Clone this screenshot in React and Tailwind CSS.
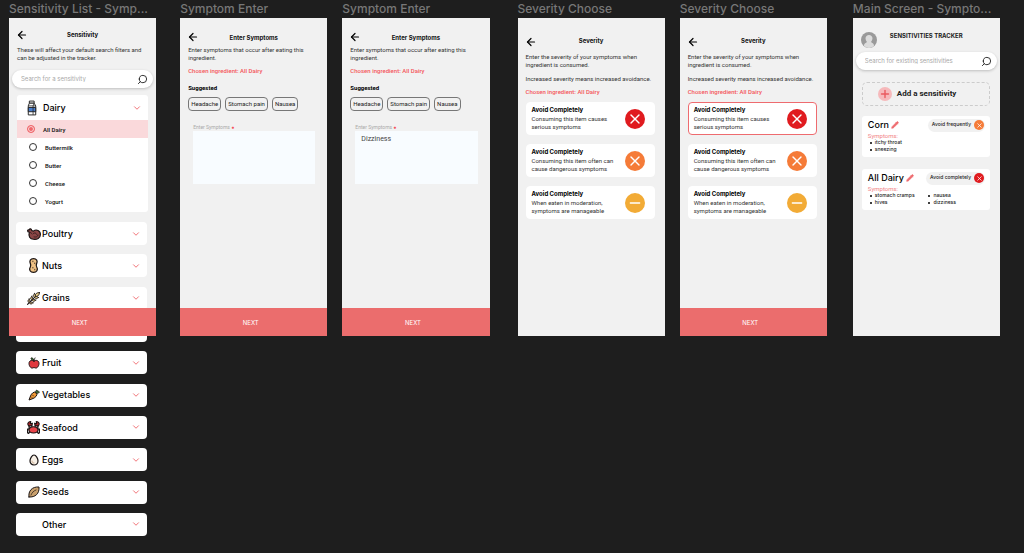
import React from 'react';
import { ArrowLeft, ChevronDown, Minus, Pencil, Plus, Search, X } from 'lucide-react';
import clsx from 'clsx';

/* Food icons */
const Icon = ({ children, className = 'size-3' }) => (
    <svg
        viewBox="0 0 24 24"
        className={clsx('shrink-0', className)}
        stroke="#1a1414"
        strokeWidth="2"
        strokeLinecap="round"
        strokeLinejoin="round"
        fill="none"
        aria-hidden="true"
    >
        {children}
    </svg>
);

const MilkIcon = () => (
    <svg viewBox="0 0 18 30" className="h-4 w-[10px] shrink-0" stroke="#222" strokeWidth="1.8" strokeLinejoin="round" aria-hidden="true">
        <path d="M4 2h9v4H4z" fill="#fff" />
        <path d="M4 6h9l3 5v17H2V11z" fill="#fff" />
        <path d="M2 14h14v8H2z" fill="#4a80d0" />
        <path d="M11 11v17M2 11h14M11 11l2-5" fill="none" strokeWidth="1.4" />
    </svg>
);

const PoultryIcon = () => (
    <Icon className="size-[14px]">
        <path d="M4 9C0 9 0 4 4 5c0-3 4-2 4 1l3 1c5-4 12-1 12 6 0 6-6 9-12 8-6 0-9-5-7-12z" fill="#8a4545" />
        <path d="M10 12c2-3 6-2 7 1M12 17c3 1 6 0 7-3M5 9l3 2" strokeWidth="1.2" />
    </Icon>
);

const PeanutIcon = () => (
    <Icon className="size-[15px]">
        <path d="M12 1c5 0 7 4 5 8-1 2-1 3 0 5 3 5 0 9-5 9s-8-4-5-9c1-2 1-3 0-5C5 5 7 1 12 1z" fill="#efc184" />
        <path d="M11 5v1M14 8v1M11 15v1M14 18v1" strokeWidth="1.2" />
    </Icon>
);

const WheatIcon = () => (
    <Icon className="size-[13px]">
        <path d="M1 23 20 4" />
        <path d="M23 1c-5 0-8 2-8 7 5 1 8-2 8-7z" fill="#ecd08a" strokeWidth="1.6" />
        <path d="M14 3c2 2 2 5 0 7-3-2-3-5 0-7zM9 8c2 2 2 5 0 7-3-2-3-5 0-7zM4 13c2 2 2 5 0 7-3-2-3-5 0-7z" fill="#ecd08a" strokeWidth="1.6" />
        <path d="M21 10c-2-2-5-2-7 0 2 3 5 3 7 0zM16 15c-2-2-5-2-7 0 2 3 5 3 7 0zM11 20c-2-2-5-2-7 0 2 3 5 3 7 0z" fill="#ecd08a" strokeWidth="1.6" />
    </Icon>
);

const AppleIcon = () => (
    <Icon>
        <path d="M12 8c4-3 10-1 10 5 0 5-4 10-7 9-2-1-4-1-6 0-3 1-7-4-7-9 0-6 6-8 10-5z" fill="#e0383e" />
        <path d="M12 8c0-3 1-4 2-6" />
        <path d="M11 6C8 7 6 5 6 2c3-1 5 1 5 4z" fill="#4f9e4c" strokeWidth="1.6" />
    </Icon>
);

const CarrotIcon = () => (
    <Icon>
        <path d="M16 6c-5-1-9 3-11 8L2 22l8-3c5-2 9-6 8-11z" fill="#f29a37" />
        <path d="M16 8c-1-3 0-6 2-6 1 1 1 2 1 3 2-1 3 0 4 1-1 2-4 3-7 2z" fill="#4f9e4c" strokeWidth="1.6" />
        <path d="M9 12l2 2M7 16l1 1" strokeWidth="1.4" />
    </Icon>
);

const CrabIcon = () => (
    <Icon className="size-[13px]">
        <path d="M3 9C0 5 2 1 7 1L6 5l4-1c0 4-3 6-7 5zM21 9c3-4 1-8-4-8l1 4-4-1c0 4 3 6 7 5z" fill="#b52a30" />
        <path d="M4 9v5M20 9v5M9 8v4M15 8v4M3 15H1v7M21 15h2v7M5 20l-2 3M19 20l2 3" strokeWidth="2.4" />
        <path d="M4 15c2-6 14-6 16 0 2 4-3 7-8 7s-10-3-8-7z" fill="#e8454a" />
    </Icon>
);

const EggIcon = () => (
    <Icon>
        <path d="M12 2c4 0 8 7 8 12 0 4-3 8-8 8s-8-4-8-8c0-5 4-12 8-12z" fill="#f7f0e6" strokeWidth="2.4" />
        <path d="M8 14c0 3 2 4 4 4" stroke="#c9a88b" />
    </Icon>
);

const SeedIcon = () => (
    <Icon>
        <path d="M2 22C0 10 8 1 22 2c1 13-7 21-20 20z" fill="#c9a06c" />
        <path d="M6 18c2-5 5-8 10-10" strokeWidth="1.4" />
    </Icon>
);

const dairyItems = ['All Dairy', 'Buttermilk', 'Butter', 'Cheese', 'Yogurt'];

const categories = [
    { name: 'Poultry', icon: PoultryIcon },
    { name: 'Nuts', icon: PeanutIcon },
    { name: 'Grains', icon: WheatIcon },
    { name: '' },
    { name: 'Fruit', icon: AppleIcon },
    { name: 'Vegetables', icon: CarrotIcon },
    { name: 'Seafood', icon: CrabIcon },
    { name: 'Eggs', icon: EggIcon },
    { name: 'Seeds', icon: SeedIcon },
    { name: 'Other' },
];

const severities = [
    { text: ['Consuming this item causes', 'serious symptoms'], icon: X, color: 'bg-[#e01b1f]' },
    { text: ['Consuming this item often can', 'cause dangerous symptoms'], icon: X, color: 'bg-[#f57b38]' },
    { text: ['When eaten in moderation,', 'symptoms are manageable'], icon: Minus, color: 'bg-[#f2ab36]' },
];

/* Shared pieces */
function Frame({ label, className, next, children }) {
    return (
        <section className={clsx('min-w-0 flex-1', className)}>
            <h2 className="h-[18px] whitespace-nowrap text-[12px] leading-[18px] font-medium text-[#777]">{label}</h2>
            <div className="relative h-[318px] bg-[#f1f1f1] text-[#333]">
                {children}
                {next && (
                    <button className="absolute inset-x-0 bottom-0 h-7 bg-[#eb6d6d] pr-[6px] text-[6px] text-white">NEXT</button>
                )}
            </div>
        </section>
    );
}

function TopBar({ title, className }) {
    return (
        <header className={clsx('grid grid-cols-[11px_1fr_11px] px-[7px]', className)}>
            <button aria-label="Back" className="flex h-[10px] items-center">
                <ArrowLeft size={12} strokeWidth={2.4} className="shrink-0 text-black" />
            </button>
            <h1 className="text-center text-[6px] leading-[8px] font-bold text-[#111]">{title}</h1>
        </header>
    );
}

function SearchBox({ placeholder }) {
    return (
        <label className="mx-[3px] flex h-[18px] items-center rounded-full bg-white pr-[5px] pl-[9px] shadow-[0_1px_3px_rgba(0,0,0,0.22)]">
            <input
                type="search"
                aria-label={placeholder}
                placeholder={placeholder}
                className="min-w-0 flex-1 text-[6px] leading-[8px] outline-none placeholder:text-[#a8a8a8]"
            />
            <Search size={11} strokeWidth={2} className="-scale-x-100 text-[#222]" />
        </label>
    );
}

const Chosen = ({ className }) => (
    <p className={clsx("font-[Roboto,sans-serif] text-[6px] leading-[8px] font-medium text-[#f4555a]", className)}>
        Chosen ingredient: All Dairy
    </p>
);

/* Screens */
function SensitivityList() {
    return (
        <>
            <TopBar title="Sensitivity" className="items-center pt-3" />
            <p className="mt-[6px] px-2 font-[Roboto,sans-serif] text-[6px] leading-[8px]">
                These will affect your default search filters and<br />can be adjusted in the tracker.
            </p>
            <div className="mt-2">
                <SearchBox placeholder="Search for a sensitivity" />
            </div>
            <fieldset className="mx-2 mt-[7px] rounded-[3px] bg-white pb-[2px]">
                <button className="flex h-[25px] w-full items-center pr-[6px] pl-[10px] text-[9px] text-black">
                    <MilkIcon />
                    <span className="ml-[6px] flex-1 text-left font-medium">Dairy</span>
                    <ChevronDown size={10} strokeWidth={2.2} className="text-[#f0686c]" />
                </button>
                {dairyItems.map((item, i) => (
                    <label
                        key={item}
                        className={clsx(
                            'flex h-[18px] items-center gap-2 font-[Roboto,sans-serif] text-[6px] font-medium text-[#111]',
                            i === 0 ? 'bg-[#fad9db] pl-[10px]' : 'pl-[12px]',
                        )}
                    >
                        <input
                            type="radio"
                            name="dairy"
                            defaultChecked={i === 0}
                            className="size-2 appearance-none rounded-full border border-[#333] bg-white checked:border-[#f0686c] checked:bg-[#f0686c] checked:shadow-[inset_0_0_0_1px_#fad9db]"
                        />
                        {item}
                    </label>
                ))}
            </fieldset>
            <ul className="mr-[9px] ml-[7px] mt-[10px] flex h-[314px] flex-col justify-between">
                {categories.map(({ name, icon: Glyph }, i) => (
                    <li key={i}>
                        <button className="flex h-[23px] w-full items-center rounded-[4px] bg-white pr-[6px] pl-[9px] text-[9px] text-black">
                            <span className="flex w-[17px] justify-center">{Glyph && <Glyph />}</span>
                            <span className="flex-1 text-left font-medium">{name}</span>
                            <ChevronDown size={10} strokeWidth={2.2} className="text-[#f0686c]" />
                        </button>
                    </li>
                ))}
            </ul>
        </>
    );
}

function SymptomEnter({ id, value }) {
    return (
        <>
            <TopBar title="Enter Symptoms" className="items-end pt-[14px]" />
            <div className="px-2 font-[Roboto,sans-serif] text-[6px] leading-[8px]">
                <p className="mt-1">Enter symptoms that occur after eating this<br />ingredient.</p>
                <Chosen className="mt-[5px]" />
                <h3 className="mt-[9px] font-bold text-black">Suggested</h3>
                <div className="mt-[5px] flex gap-1">
                    {['Headache', 'Stomach pain', 'Nausea'].map((s) => (
                        <button key={s} className="h-[14px] rounded-[4px] border border-[#777] px-[2px] text-[#222]">{s}</button>
                    ))}
                </div>
            </div>
            <div className="mt-3 mr-3 ml-[13px] font-[Roboto,sans-serif]">
                <label htmlFor={id} className="block text-[5px] leading-[8px] text-[#aaa]">
                    Enter Symptoms <span className="text-[#f4555a]">●</span>
                </label>
                <textarea
                    id={id}
                    defaultValue={value}
                    className="block h-[53px] w-full resize-none bg-[#f8fcff] px-[6px] py-1 text-[7px] leading-[8px] text-[#444] outline-none"
                />
            </div>
        </>
    );
}

function SeverityChoose({ selected }) {
    return (
        <>
            <TopBar title="Severity" className="items-start pt-[19px]" />
            <div className="px-2 font-[Roboto,sans-serif] text-[6px] leading-[8px]">
                <p className="mt-[6px]">Enter the severity of your symptoms when<br />ingredient is consumed.</p>
                <p className="mt-[6px] whitespace-nowrap">Increased severity means increased avoidance.</p>
                <Chosen className="mt-[5px]" />
                <div className="mt-[6px] mr-[2px] flex flex-col gap-[9px]">
                    {severities.map(({ text, icon: Glyph, color }, i) => (
                        <button
                            key={i}
                            className={clsx(
                                'flex items-center justify-between rounded-[4px] border bg-white py-[3px] pr-[9px] pl-[5px] text-left',
                                selected === i ? 'border-[#ee6b6f]' : 'border-white',
                            )}
                        >
                            <span>
                                <b className="mb-px block font-[Inter,sans-serif] text-black">Avoid Completely</b>
                                {text[0]}<br />{text[1]}
                            </span>
                            <span className={clsx('flex size-5 items-center justify-center rounded-full text-white', color)}>
                                <Glyph size={16} strokeWidth={2} />
                            </span>
                        </button>
                    ))}
                </div>
            </div>
        </>
    );
}

function SensitivityCard({ name, level, color, symptoms }) {
    return (
        <article className="rounded-[3px] bg-white pt-[2px] pr-[5px] pb-1 pl-[6px]">
            <div className="flex items-center">
                <h3 className="text-[9px] leading-[14px] font-medium text-black">{name}</h3>
                <button aria-label={`Edit ${name}`} className="ml-[2px]">
                    <Pencil size={8} className="fill-[#ee6b6f] text-[#ee6b6f]" />
                </button>
                <span className="ml-auto flex h-[13px] items-center gap-[3px] rounded-full bg-[#f1f1f1] pr-px pl-1 text-[5px] font-medium text-[#222]">
                    {level}
                    <span className={clsx('flex size-[10px] items-center justify-center rounded-full text-white', color)}>
                        <X size={7} strokeWidth={2.5} />
                    </span>
                </span>
            </div>
            <p className="font-[Roboto,sans-serif] text-[6px] leading-[7px] text-[#f28386]">Symptoms:</p>
            <ul className="grid grid-flow-col grid-cols-2 grid-rows-2 text-[5px] leading-[7px] font-medium text-[#222]">
                {symptoms.map((s) => (
                    <li key={s} className="flex items-center gap-[3px] pl-[2px] whitespace-nowrap">
                        <i className="size-[2px] rounded-full bg-black" />{s}
                    </li>
                ))}
            </ul>
        </article>
    );
}

function MainScreen() {
    return (
        <>
            <header className="flex items-start gap-[13px] pt-[14px] pl-2">
                <svg viewBox="0 0 16 16" className="size-4" aria-hidden="true">
                    <circle cx="8" cy="8" r="8" fill="#9a9a9a" />
                    <path d="M3 14c0-3 2-3 3-4-3-4-1-7 2-7s5 3 2 7c1 1 3 1 3 4a8 8 0 0 1-10 0z" fill="#dcdcdc" />
                </svg>
                <h1 className="text-[6px] leading-[8px] font-bold whitespace-nowrap text-[#222]">SENSITIVITIES TRACKER</h1>
            </header>
            <div className="mt-1">
                <SearchBox placeholder="Search for existing sensitivities" />
            </div>
            <div className="mr-[10px] ml-[9px] mt-3 flex flex-col">
                <button className="flex h-6 items-center gap-[5px] rounded-[5px] border border-dashed border-[#ccc] pl-[15px] font-[Roboto,sans-serif] text-[8px] font-bold text-[#222]">
                    <span className="flex size-[14px] items-center justify-center rounded-full bg-[#f6b9bb] text-[#ea5a5f]">
                        <Plus size={12} strokeWidth={2.8} />
                    </span>
                    Add a sensitivity
                </button>
                <div className="mt-[10px] flex flex-col gap-3">
                    <SensitivityCard name="Corn" level="Avoid frequently" color="bg-[#f57b38]" symptoms={['itchy throat', 'sneezing']} />
                    <SensitivityCard name="All Dairy" level="Avoid completely" color="bg-[#e01b1f]" symptoms={['stomach cramps', 'hives', 'nausea', 'dizziness']} />
                </div>
            </div>
        </>
    );
}

export default function App() {
    return (
        <main className="flex min-h-screen bg-[#1e1e1e] pr-6 pl-[9px] font-[Inter,sans-serif]">
            <Frame label="Sensitivity List - Symp..." next><SensitivityList /></Frame>
            <Frame label="Symptom Enter" className="ml-6" next><SymptomEnter id="symptoms-empty" /></Frame>
            <Frame label="Symptom Enter" className="ml-[15px]" next><SymptomEnter id="symptoms-filled" value="Dizziness" /></Frame>
            <Frame label="Severity Choose" className="ml-7"><SeverityChoose /></Frame>
            <Frame label="Severity Choose" className="ml-[15px]" next><SeverityChoose selected={0} /></Frame>
            <Frame label="Main Screen - Sympto..." className="ml-[26px]"><MainScreen /></Frame>
        </main>
    );
}
